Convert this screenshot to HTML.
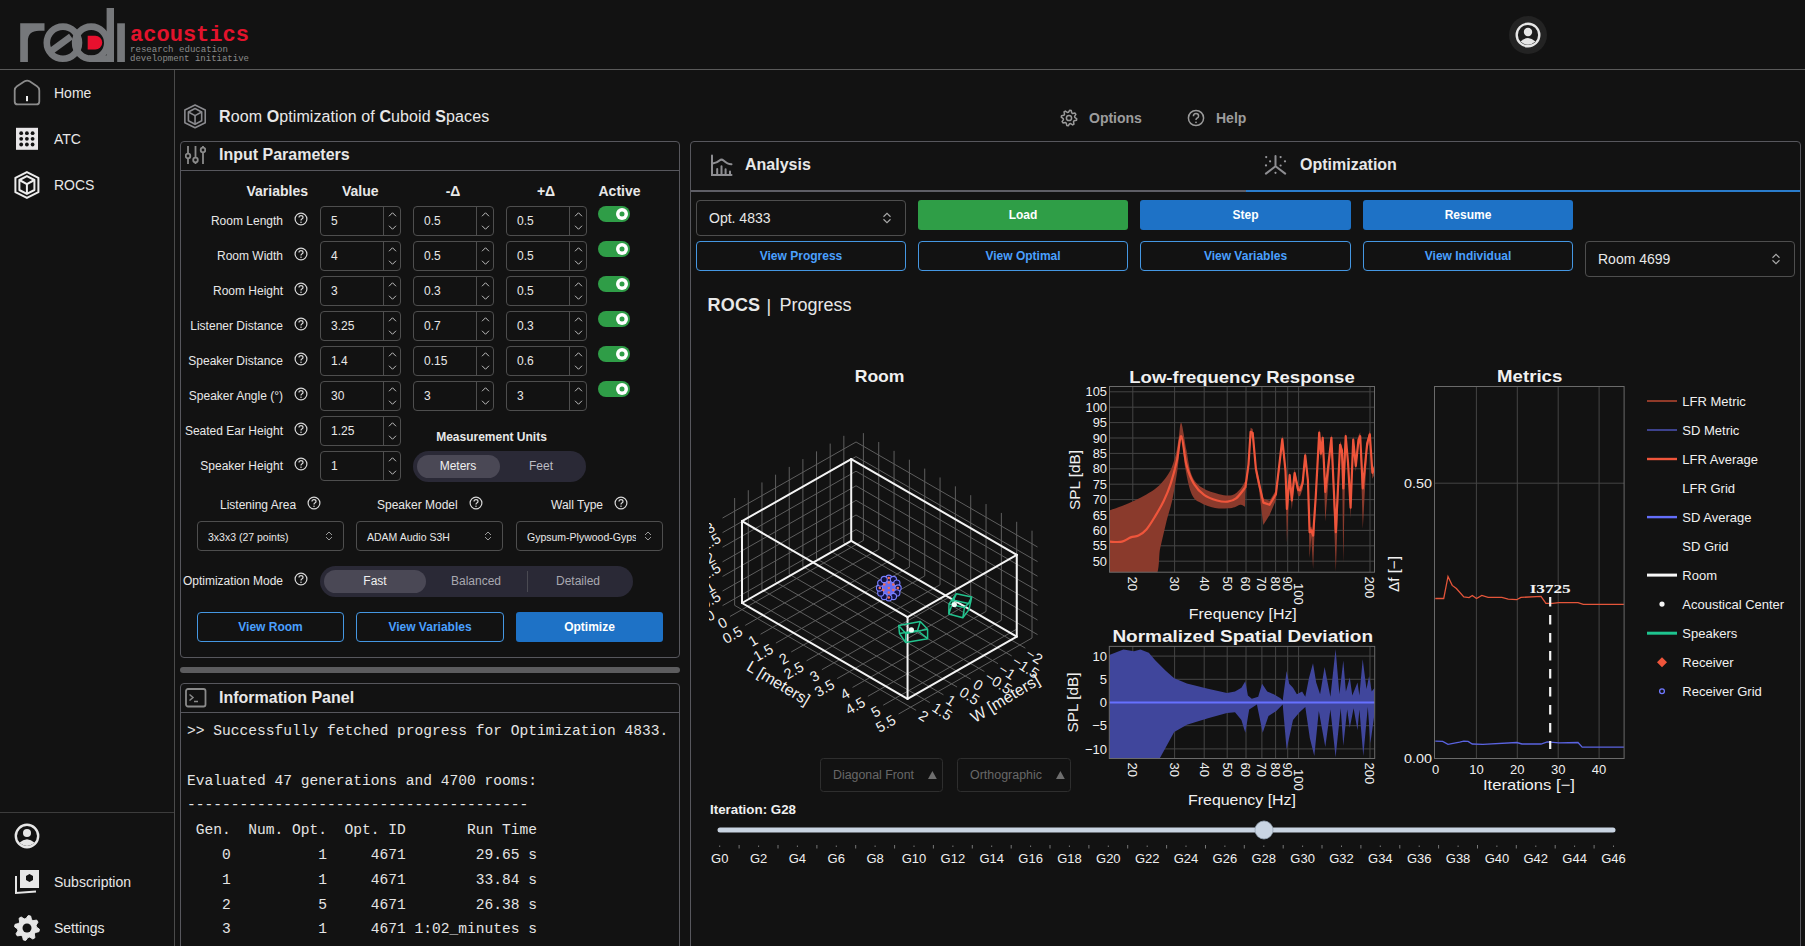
<!DOCTYPE html><html><head><meta charset="utf-8"><title>ROCS</title><style>
*{box-sizing:border-box;margin:0;padding:0}
html,body{width:1805px;height:946px;overflow:hidden;background:#121212;color:#e8e8e8;font-family:"Liberation Sans",sans-serif}
.a{position:absolute}
.t{position:absolute;white-space:nowrap;line-height:1}
.bd{font-weight:bold}
.panel{position:absolute;border:1px solid #57575d;border-radius:4px}
.inp{position:absolute;width:81px;height:30px;border:1px solid #4e4e4e;border-radius:4px}
.inp .sp{position:absolute;right:0;top:0;width:17px;height:28px;border-left:1px solid #4e4e4e}
.inp .v{position:absolute;left:10px;top:7.2px;font-size:12px;color:#e8e8e8}
.tog{position:absolute;width:32px;height:16px;border-radius:8px;background:#2f9d47}
.tog:after{content:"";position:absolute;right:2px;top:2px;width:12px;height:12px;border-radius:6px;background:#2f9d47;box-shadow:inset 0 0 0 3.5px #fff}
.btn{position:absolute;border-radius:3px;font-weight:bold;font-size:12px;text-align:center;color:#fff}
.obtn{position:absolute;border-radius:4px;border:1.5px solid #4597e2;font-weight:bold;font-size:12px;text-align:center;color:#4aa0ff}
.sel{position:absolute;border:1px solid #4e4e4e;border-radius:4px}
.help{position:absolute;width:13px;height:13px}
</style></head><body>
<div class="a" style="left:0;top:69px;width:1805px;height:1px;background:#5a5a5a"></div>
<svg class="a" style="left:0;top:0" width="260" height="69" viewBox="0 0 260 69">
<path d="M20.2,62 V23.3 H44.5 V30.8 H39 Q27.9,30.8 27.9,41 V62 Z" fill="#76787b"/>
<circle cx="62.9" cy="42.7" r="16.1" fill="none" stroke="#76787b" stroke-width="6.6"/>
<path d="M50.5,51.5 L71,36.5" stroke="#76787b" stroke-width="6.6"/>
<circle cx="91.2" cy="42.7" r="16.1" fill="none" stroke="#76787b" stroke-width="6.6"/>
<rect x="88.8" y="55.4" width="25.2" height="6.6" fill="#76787b"/>
<rect x="106.6" y="8" width="7.4" height="54" fill="#76787b"/>
<rect x="117.2" y="23.3" width="7.7" height="38.7" fill="#76787b"/>
<path d="M87.7,35.7 H95.3 A6.95,6.95 0 0 1 95.3,49.6 H87.7 Z" fill="#e8102e"/>
<text x="130" y="41" font-family="Liberation Mono" font-weight="bold" font-size="22" fill="#e3132c" textLength="119" lengthAdjust="spacingAndGlyphs">acoustics</text>
<text x="130" y="52" font-family="Liberation Mono" font-size="9" fill="#8a8a8a" textLength="98" lengthAdjust="spacingAndGlyphs">research education</text>
<text x="130" y="60.5" font-family="Liberation Mono" font-size="9" fill="#8a8a8a" textLength="119" lengthAdjust="spacingAndGlyphs">development initiative</text>
</svg>
<div class="a" style="left:1509px;top:16px;width:38px;height:38px;border-radius:19px;background:#232323"></div>
<svg class="a" style="left:1515px;top:22px" width="26" height="26" viewBox="0 0 26 26">
<circle cx="13" cy="13" r="11.3" fill="#1d1d1d" stroke="#e6e6e6" stroke-width="2.4"/>
<circle cx="13" cy="10" r="4.2" fill="#e6e6e6"/>
<path d="M5.5,19.5 Q13,12.5 20.5,19.5 Q13,26 5.5,19.5Z" fill="#e6e6e6"/>
</svg>
<div class="a" style="left:174px;top:70px;width:1px;height:876px;background:#4a4a4a"></div>
<div class="a" style="left:0;top:812px;width:174px;height:1px;background:#3c3c3c"></div>
<svg class="a" style="left:0;top:0;overflow:visible" width="1" height="1">
<path d="M14.7,90.5 Q14.7,87.8 17,86.3 L24.6,81.3 Q27.1,79.8 29.6,81.3 L37,86.3 Q39.3,87.8 39.3,90.5 V101.4 Q39.3,104.4 36.3,104.4 H17.7 Q14.7,104.4 14.7,101.4 Z" fill="none" stroke="#8c8c8c" stroke-width="1.8"/>
<rect x="26" y="96" width="2" height="5.2" fill="#f0f0f0"/>
</svg>
<div class="t" style="left:54px;top:86.15px;font-size:14px;color:#e8e8e8;">Home</div>
<svg class="a" style="left:0;top:0;overflow:visible" width="1" height="1"><rect x="16" y="127.8" width="22" height="22" fill="#e8e6e8"/><circle cx="21.20" cy="133.20" r="1.9" fill="#121212"/><circle cx="21.20" cy="138.85" r="1.9" fill="#121212"/><circle cx="21.20" cy="144.50" r="1.9" fill="#121212"/><circle cx="26.90" cy="133.20" r="1.9" fill="#121212"/><circle cx="26.90" cy="138.85" r="1.9" fill="#121212"/><circle cx="26.90" cy="144.50" r="1.9" fill="#121212"/><circle cx="32.60" cy="133.20" r="1.9" fill="#121212"/><circle cx="32.60" cy="138.85" r="1.9" fill="#121212"/><circle cx="32.60" cy="144.50" r="1.9" fill="#121212"/></svg>
<div class="t" style="left:54px;top:132.15px;font-size:14px;color:#e8e8e8;">ATC</div>
<svg class="a" style="left:0;top:0;overflow:visible" width="1" height="1">
<polygon points="26.90,172.10 38.40,177.80 38.40,192.20 26.90,197.90 15.40,192.20 15.40,177.80" fill="none" stroke="#ececec" stroke-width="2.0" stroke-linejoin="round"/>
<polygon points="26.90,176.10 34.40,180.00 34.40,190.00 26.90,193.90 19.40,190.00 19.40,180.00" fill="none" stroke="#ececec" stroke-width="2.0" stroke-linejoin="round"/>
<polyline points="19.40,180.00 26.90,184.10 34.40,180.00" fill="none" stroke="#ececec" stroke-width="2.0" stroke-linejoin="round"/>
<line x1="26.90" y1="184.10" x2="26.90" y2="193.90" stroke="#ececec" stroke-width="2.0"/>
</svg>
<div class="t" style="left:54px;top:178.15px;font-size:14px;color:#e8e8e8;">ROCS</div>
<svg class="a" style="left:14px;top:823px" width="26" height="26" viewBox="0 0 26 26">
<circle cx="13" cy="13" r="11.2" fill="none" stroke="#e6e6e6" stroke-width="2.4"/>
<circle cx="13" cy="10" r="4" fill="#e6e6e6"/>
<path d="M5.3,19.8 Q13,12.8 20.7,19.8 Q13,26 5.3,19.8Z" fill="#e6e6e6"/>
</svg>
<svg class="a" style="left:14px;top:869px" width="26" height="26" viewBox="0 0 26 26">
<rect x="6" y="1" width="19" height="18" fill="#e6e6e6"/>
<path d="M15.5,5 L19,7 V11 L15.5,13 L12,11 V7Z" fill="#121212"/>
<path d="M2,7 V24 L22,22.5" fill="none" stroke="#e6e6e6" stroke-width="2"/>
</svg>
<div class="t" style="left:54px;top:875.15px;font-size:14px;color:#e8e8e8;">Subscription</div>
<svg class="a" style="left:13px;top:914px" width="28" height="28" viewBox="0 0 28 28"><polygon points="15.23,1.56 17.63,2.04 18.48,5.62 20.03,6.66 23.66,6.07 25.02,8.11 23.09,11.24 23.45,13.07 26.44,15.23 25.96,17.63 22.38,18.48 21.34,20.03 21.93,23.66 19.89,25.02 16.76,23.09 14.93,23.45 12.77,26.44 10.37,25.96 9.52,22.38 7.97,21.34 4.34,21.93 2.98,19.89 4.91,16.76 4.55,14.93 1.56,12.77 2.04,10.37 5.62,9.52 6.66,7.97 6.07,4.34 8.11,2.98 11.24,4.91 13.07,4.55" fill="#e6e6e6" stroke="#e6e6e6" stroke-width="1" stroke-linejoin="round"/><circle cx="14" cy="14" r="4.5" fill="#121212"/></svg>
<div class="t" style="left:54px;top:921.15px;font-size:14px;color:#e8e8e8;">Settings</div>
<svg class="a" style="left:0;top:0;overflow:visible" width="1" height="1">
<polygon points="195.05,104.98 205.23,110.03 205.23,122.77 195.05,127.82 184.87,122.77 184.87,110.03" fill="none" stroke="#8a8a8e" stroke-width="1.6" stroke-linejoin="round"/>
<polygon points="195.05,108.52 201.69,111.98 201.69,120.83 195.05,124.28 188.41,120.83 188.41,111.98" fill="none" stroke="#8a8a8e" stroke-width="1.6" stroke-linejoin="round"/>
<polyline points="188.41,111.98 195.05,115.60 201.69,111.98" fill="none" stroke="#8a8a8e" stroke-width="1.6" stroke-linejoin="round"/>
<line x1="195.05" y1="115.60" x2="195.05" y2="124.28" stroke="#8a8a8e" stroke-width="1.6"/>
</svg>
<div class="t" style="left:219px;top:108.5px;font-size:16px;letter-spacing:0.1px;color:#e8e8e8"><b>R</b>oom <b>O</b>ptimization of <b>C</b>uboid <b>S</b>paces</div>
<svg class="a" style="left:1060px;top:109px" width="18" height="18" viewBox="0 0 18 18"><polygon points="9.76,1.24 11.26,1.54 11.73,3.88 12.68,4.52 15.03,4.05 15.88,5.32 14.55,7.32 14.77,8.43 16.76,9.76 16.46,11.26 14.12,11.73 13.48,12.68 13.95,15.03 12.68,15.88 10.68,14.55 9.57,14.77 8.24,16.76 6.74,16.46 6.27,14.12 5.32,13.48 2.97,13.95 2.12,12.68 3.45,10.68 3.23,9.57 1.24,8.24 1.54,6.74 3.88,6.27 4.52,5.32 4.05,2.97 5.32,2.12 7.32,3.45 8.43,3.23" fill="none" stroke="#9a9a9a" stroke-width="1.5" stroke-linejoin="round"/><circle cx="9" cy="9" r="2.6" fill="none" stroke="#9a9a9a" stroke-width="1.5"/></svg>
<div class="t" style="left:1089px;top:110.65px;font-size:14px;color:#9c9c9c;font-weight:bold;">Options</div>
<svg class="a" style="left:1187px;top:109px" width="18" height="18" viewBox="0 0 18 18">
<circle cx="9" cy="9" r="7.6" fill="none" stroke="#9a9a9a" stroke-width="1.5"/>
<path d="M6.4,7.2 Q6.4,4.4 9,4.4 Q11.6,4.4 11.6,6.9 Q11.6,8.4 9.9,9.2 Q9,9.7 9,11" fill="none" stroke="#9a9a9a" stroke-width="1.5"/>
<circle cx="9" cy="13.3" r="0.9" fill="#9a9a9a"/>
</svg>
<div class="t" style="left:1216px;top:110.65px;font-size:14px;color:#9c9c9c;font-weight:bold;">Help</div>
<div class="panel" style="left:180px;top:141px;width:500px;height:517px"></div>
<div class="a" style="left:181px;top:170px;width:498px;height:1px;background:#57575d"></div>
<svg class="a" style="left:185px;top:145px" width="21" height="20" viewBox="0 0 21 20">
<g stroke="#8a8a8a" stroke-width="1.8" fill="none">
<path d="M3,1 V19 M10.5,1 V19 M18,1 V19"/>
<circle cx="3" cy="11" r="2.3" fill="#121212"/>
<circle cx="10.5" cy="15" r="2.3" fill="#121212"/>
<circle cx="18" cy="5" r="2.3" fill="#121212"/>
</g></svg>
<div class="t" style="left:219px;top:146.96px;font-size:16px;color:#e8e8e8;font-weight:bold;">Input Parameters</div>
<div class="t" style="left:246.5px;top:184.15px;font-size:14px;color:#e8e8e8;font-weight:bold;">Variables</div>
<div class="t" style="left:342px;top:184.15px;font-size:14px;color:#e8e8e8;font-weight:bold;">Value</div>
<div class="t" style="left:153px;width:600px;text-align:center;top:184.15px;font-size:14px;color:#e8e8e8;font-weight:bold;">-&Delta;</div>
<div class="t" style="left:246px;width:600px;text-align:center;top:184.15px;font-size:14px;color:#e8e8e8;font-weight:bold;">+&Delta;</div>
<div class="t" style="left:598.5px;top:184.15px;font-size:14px;color:#e8e8e8;font-weight:bold;">Active</div>
<div class="t" style="left:-317px;width:600px;text-align:right;top:214.84px;font-size:12px;color:#e8e8e8;">Room Length</div>
<svg class="a" style="left:293.5px;top:211.5px" width="14" height="14" viewBox="0 0 14 14">
<circle cx="7" cy="7" r="5.9" fill="none" stroke="#d8d8d8" stroke-width="1.2"/>
<path d="M5,5.6 Q5,3.6 7,3.6 Q9,3.6 9,5.4 Q9,6.5 7.8,7 Q7,7.4 7,8.6" fill="none" stroke="#d8d8d8" stroke-width="1.2"/>
<circle cx="7" cy="10.3" r="0.75" fill="#d8d8d8"/>
</svg>
<div class="inp" style="left:320px;top:206px"><div class="sp"></div><div class="v">5</div></div>
<svg class="a" style="left:384px;top:206px" width="17" height="30" viewBox="0 0 17 30"><path d="M5.0,10.25 L8.5,6.75 L12.0,10.25" fill="none" stroke="#bdbdbd" stroke-width="1"/><path d="M5.0,19.75 L8.5,23.25 L12.0,19.75" fill="none" stroke="#bdbdbd" stroke-width="1"/></svg>
<div class="inp" style="left:413px;top:206px"><div class="sp"></div><div class="v">0.5</div></div>
<svg class="a" style="left:477px;top:206px" width="17" height="30" viewBox="0 0 17 30"><path d="M5.0,10.25 L8.5,6.75 L12.0,10.25" fill="none" stroke="#bdbdbd" stroke-width="1"/><path d="M5.0,19.75 L8.5,23.25 L12.0,19.75" fill="none" stroke="#bdbdbd" stroke-width="1"/></svg>
<div class="inp" style="left:506px;top:206px"><div class="sp"></div><div class="v">0.5</div></div>
<svg class="a" style="left:570px;top:206px" width="17" height="30" viewBox="0 0 17 30"><path d="M5.0,10.25 L8.5,6.75 L12.0,10.25" fill="none" stroke="#bdbdbd" stroke-width="1"/><path d="M5.0,19.75 L8.5,23.25 L12.0,19.75" fill="none" stroke="#bdbdbd" stroke-width="1"/></svg>
<div class="tog" style="left:598px;top:206px"></div>
<div class="t" style="left:-317px;width:600px;text-align:right;top:249.84px;font-size:12px;color:#e8e8e8;">Room Width</div>
<svg class="a" style="left:293.5px;top:246.5px" width="14" height="14" viewBox="0 0 14 14">
<circle cx="7" cy="7" r="5.9" fill="none" stroke="#d8d8d8" stroke-width="1.2"/>
<path d="M5,5.6 Q5,3.6 7,3.6 Q9,3.6 9,5.4 Q9,6.5 7.8,7 Q7,7.4 7,8.6" fill="none" stroke="#d8d8d8" stroke-width="1.2"/>
<circle cx="7" cy="10.3" r="0.75" fill="#d8d8d8"/>
</svg>
<div class="inp" style="left:320px;top:241px"><div class="sp"></div><div class="v">4</div></div>
<svg class="a" style="left:384px;top:241px" width="17" height="30" viewBox="0 0 17 30"><path d="M5.0,10.25 L8.5,6.75 L12.0,10.25" fill="none" stroke="#bdbdbd" stroke-width="1"/><path d="M5.0,19.75 L8.5,23.25 L12.0,19.75" fill="none" stroke="#bdbdbd" stroke-width="1"/></svg>
<div class="inp" style="left:413px;top:241px"><div class="sp"></div><div class="v">0.5</div></div>
<svg class="a" style="left:477px;top:241px" width="17" height="30" viewBox="0 0 17 30"><path d="M5.0,10.25 L8.5,6.75 L12.0,10.25" fill="none" stroke="#bdbdbd" stroke-width="1"/><path d="M5.0,19.75 L8.5,23.25 L12.0,19.75" fill="none" stroke="#bdbdbd" stroke-width="1"/></svg>
<div class="inp" style="left:506px;top:241px"><div class="sp"></div><div class="v">0.5</div></div>
<svg class="a" style="left:570px;top:241px" width="17" height="30" viewBox="0 0 17 30"><path d="M5.0,10.25 L8.5,6.75 L12.0,10.25" fill="none" stroke="#bdbdbd" stroke-width="1"/><path d="M5.0,19.75 L8.5,23.25 L12.0,19.75" fill="none" stroke="#bdbdbd" stroke-width="1"/></svg>
<div class="tog" style="left:598px;top:241px"></div>
<div class="t" style="left:-317px;width:600px;text-align:right;top:284.84px;font-size:12px;color:#e8e8e8;">Room Height</div>
<svg class="a" style="left:293.5px;top:281.5px" width="14" height="14" viewBox="0 0 14 14">
<circle cx="7" cy="7" r="5.9" fill="none" stroke="#d8d8d8" stroke-width="1.2"/>
<path d="M5,5.6 Q5,3.6 7,3.6 Q9,3.6 9,5.4 Q9,6.5 7.8,7 Q7,7.4 7,8.6" fill="none" stroke="#d8d8d8" stroke-width="1.2"/>
<circle cx="7" cy="10.3" r="0.75" fill="#d8d8d8"/>
</svg>
<div class="inp" style="left:320px;top:276px"><div class="sp"></div><div class="v">3</div></div>
<svg class="a" style="left:384px;top:276px" width="17" height="30" viewBox="0 0 17 30"><path d="M5.0,10.25 L8.5,6.75 L12.0,10.25" fill="none" stroke="#bdbdbd" stroke-width="1"/><path d="M5.0,19.75 L8.5,23.25 L12.0,19.75" fill="none" stroke="#bdbdbd" stroke-width="1"/></svg>
<div class="inp" style="left:413px;top:276px"><div class="sp"></div><div class="v">0.3</div></div>
<svg class="a" style="left:477px;top:276px" width="17" height="30" viewBox="0 0 17 30"><path d="M5.0,10.25 L8.5,6.75 L12.0,10.25" fill="none" stroke="#bdbdbd" stroke-width="1"/><path d="M5.0,19.75 L8.5,23.25 L12.0,19.75" fill="none" stroke="#bdbdbd" stroke-width="1"/></svg>
<div class="inp" style="left:506px;top:276px"><div class="sp"></div><div class="v">0.5</div></div>
<svg class="a" style="left:570px;top:276px" width="17" height="30" viewBox="0 0 17 30"><path d="M5.0,10.25 L8.5,6.75 L12.0,10.25" fill="none" stroke="#bdbdbd" stroke-width="1"/><path d="M5.0,19.75 L8.5,23.25 L12.0,19.75" fill="none" stroke="#bdbdbd" stroke-width="1"/></svg>
<div class="tog" style="left:598px;top:276px"></div>
<div class="t" style="left:-317px;width:600px;text-align:right;top:319.84px;font-size:12px;color:#e8e8e8;">Listener Distance</div>
<svg class="a" style="left:293.5px;top:316.5px" width="14" height="14" viewBox="0 0 14 14">
<circle cx="7" cy="7" r="5.9" fill="none" stroke="#d8d8d8" stroke-width="1.2"/>
<path d="M5,5.6 Q5,3.6 7,3.6 Q9,3.6 9,5.4 Q9,6.5 7.8,7 Q7,7.4 7,8.6" fill="none" stroke="#d8d8d8" stroke-width="1.2"/>
<circle cx="7" cy="10.3" r="0.75" fill="#d8d8d8"/>
</svg>
<div class="inp" style="left:320px;top:311px"><div class="sp"></div><div class="v">3.25</div></div>
<svg class="a" style="left:384px;top:311px" width="17" height="30" viewBox="0 0 17 30"><path d="M5.0,10.25 L8.5,6.75 L12.0,10.25" fill="none" stroke="#bdbdbd" stroke-width="1"/><path d="M5.0,19.75 L8.5,23.25 L12.0,19.75" fill="none" stroke="#bdbdbd" stroke-width="1"/></svg>
<div class="inp" style="left:413px;top:311px"><div class="sp"></div><div class="v">0.7</div></div>
<svg class="a" style="left:477px;top:311px" width="17" height="30" viewBox="0 0 17 30"><path d="M5.0,10.25 L8.5,6.75 L12.0,10.25" fill="none" stroke="#bdbdbd" stroke-width="1"/><path d="M5.0,19.75 L8.5,23.25 L12.0,19.75" fill="none" stroke="#bdbdbd" stroke-width="1"/></svg>
<div class="inp" style="left:506px;top:311px"><div class="sp"></div><div class="v">0.3</div></div>
<svg class="a" style="left:570px;top:311px" width="17" height="30" viewBox="0 0 17 30"><path d="M5.0,10.25 L8.5,6.75 L12.0,10.25" fill="none" stroke="#bdbdbd" stroke-width="1"/><path d="M5.0,19.75 L8.5,23.25 L12.0,19.75" fill="none" stroke="#bdbdbd" stroke-width="1"/></svg>
<div class="tog" style="left:598px;top:311px"></div>
<div class="t" style="left:-317px;width:600px;text-align:right;top:354.84px;font-size:12px;color:#e8e8e8;">Speaker Distance</div>
<svg class="a" style="left:293.5px;top:351.5px" width="14" height="14" viewBox="0 0 14 14">
<circle cx="7" cy="7" r="5.9" fill="none" stroke="#d8d8d8" stroke-width="1.2"/>
<path d="M5,5.6 Q5,3.6 7,3.6 Q9,3.6 9,5.4 Q9,6.5 7.8,7 Q7,7.4 7,8.6" fill="none" stroke="#d8d8d8" stroke-width="1.2"/>
<circle cx="7" cy="10.3" r="0.75" fill="#d8d8d8"/>
</svg>
<div class="inp" style="left:320px;top:346px"><div class="sp"></div><div class="v">1.4</div></div>
<svg class="a" style="left:384px;top:346px" width="17" height="30" viewBox="0 0 17 30"><path d="M5.0,10.25 L8.5,6.75 L12.0,10.25" fill="none" stroke="#bdbdbd" stroke-width="1"/><path d="M5.0,19.75 L8.5,23.25 L12.0,19.75" fill="none" stroke="#bdbdbd" stroke-width="1"/></svg>
<div class="inp" style="left:413px;top:346px"><div class="sp"></div><div class="v">0.15</div></div>
<svg class="a" style="left:477px;top:346px" width="17" height="30" viewBox="0 0 17 30"><path d="M5.0,10.25 L8.5,6.75 L12.0,10.25" fill="none" stroke="#bdbdbd" stroke-width="1"/><path d="M5.0,19.75 L8.5,23.25 L12.0,19.75" fill="none" stroke="#bdbdbd" stroke-width="1"/></svg>
<div class="inp" style="left:506px;top:346px"><div class="sp"></div><div class="v">0.6</div></div>
<svg class="a" style="left:570px;top:346px" width="17" height="30" viewBox="0 0 17 30"><path d="M5.0,10.25 L8.5,6.75 L12.0,10.25" fill="none" stroke="#bdbdbd" stroke-width="1"/><path d="M5.0,19.75 L8.5,23.25 L12.0,19.75" fill="none" stroke="#bdbdbd" stroke-width="1"/></svg>
<div class="tog" style="left:598px;top:346px"></div>
<div class="t" style="left:-317px;width:600px;text-align:right;top:389.84px;font-size:12px;color:#e8e8e8;">Speaker Angle (&deg;)</div>
<svg class="a" style="left:293.5px;top:386.5px" width="14" height="14" viewBox="0 0 14 14">
<circle cx="7" cy="7" r="5.9" fill="none" stroke="#d8d8d8" stroke-width="1.2"/>
<path d="M5,5.6 Q5,3.6 7,3.6 Q9,3.6 9,5.4 Q9,6.5 7.8,7 Q7,7.4 7,8.6" fill="none" stroke="#d8d8d8" stroke-width="1.2"/>
<circle cx="7" cy="10.3" r="0.75" fill="#d8d8d8"/>
</svg>
<div class="inp" style="left:320px;top:381px"><div class="sp"></div><div class="v">30</div></div>
<svg class="a" style="left:384px;top:381px" width="17" height="30" viewBox="0 0 17 30"><path d="M5.0,10.25 L8.5,6.75 L12.0,10.25" fill="none" stroke="#bdbdbd" stroke-width="1"/><path d="M5.0,19.75 L8.5,23.25 L12.0,19.75" fill="none" stroke="#bdbdbd" stroke-width="1"/></svg>
<div class="inp" style="left:413px;top:381px"><div class="sp"></div><div class="v">3</div></div>
<svg class="a" style="left:477px;top:381px" width="17" height="30" viewBox="0 0 17 30"><path d="M5.0,10.25 L8.5,6.75 L12.0,10.25" fill="none" stroke="#bdbdbd" stroke-width="1"/><path d="M5.0,19.75 L8.5,23.25 L12.0,19.75" fill="none" stroke="#bdbdbd" stroke-width="1"/></svg>
<div class="inp" style="left:506px;top:381px"><div class="sp"></div><div class="v">3</div></div>
<svg class="a" style="left:570px;top:381px" width="17" height="30" viewBox="0 0 17 30"><path d="M5.0,10.25 L8.5,6.75 L12.0,10.25" fill="none" stroke="#bdbdbd" stroke-width="1"/><path d="M5.0,19.75 L8.5,23.25 L12.0,19.75" fill="none" stroke="#bdbdbd" stroke-width="1"/></svg>
<div class="tog" style="left:598px;top:381px"></div>
<div class="t" style="left:-317px;width:600px;text-align:right;top:424.84px;font-size:12px;color:#e8e8e8;">Seated Ear Height</div>
<svg class="a" style="left:293.5px;top:421.5px" width="14" height="14" viewBox="0 0 14 14">
<circle cx="7" cy="7" r="5.9" fill="none" stroke="#d8d8d8" stroke-width="1.2"/>
<path d="M5,5.6 Q5,3.6 7,3.6 Q9,3.6 9,5.4 Q9,6.5 7.8,7 Q7,7.4 7,8.6" fill="none" stroke="#d8d8d8" stroke-width="1.2"/>
<circle cx="7" cy="10.3" r="0.75" fill="#d8d8d8"/>
</svg>
<div class="inp" style="left:320px;top:416px"><div class="sp"></div><div class="v">1.25</div></div>
<svg class="a" style="left:384px;top:416px" width="17" height="30" viewBox="0 0 17 30"><path d="M5.0,10.25 L8.5,6.75 L12.0,10.25" fill="none" stroke="#bdbdbd" stroke-width="1"/><path d="M5.0,19.75 L8.5,23.25 L12.0,19.75" fill="none" stroke="#bdbdbd" stroke-width="1"/></svg>
<div class="t" style="left:-317px;width:600px;text-align:right;top:459.84px;font-size:12px;color:#e8e8e8;">Speaker Height</div>
<svg class="a" style="left:293.5px;top:456.5px" width="14" height="14" viewBox="0 0 14 14">
<circle cx="7" cy="7" r="5.9" fill="none" stroke="#d8d8d8" stroke-width="1.2"/>
<path d="M5,5.6 Q5,3.6 7,3.6 Q9,3.6 9,5.4 Q9,6.5 7.8,7 Q7,7.4 7,8.6" fill="none" stroke="#d8d8d8" stroke-width="1.2"/>
<circle cx="7" cy="10.3" r="0.75" fill="#d8d8d8"/>
</svg>
<div class="inp" style="left:320px;top:451px"><div class="sp"></div><div class="v">1</div></div>
<svg class="a" style="left:384px;top:451px" width="17" height="30" viewBox="0 0 17 30"><path d="M5.0,10.25 L8.5,6.75 L12.0,10.25" fill="none" stroke="#bdbdbd" stroke-width="1"/><path d="M5.0,19.75 L8.5,23.25 L12.0,19.75" fill="none" stroke="#bdbdbd" stroke-width="1"/></svg>
<div class="t" style="left:191.5px;width:600px;text-align:center;top:431.34px;font-size:12px;color:#e8e8e8;font-weight:bold;">Measurement Units</div>
<div class="a" style="left:413px;top:451px;width:173px;height:31px;border-radius:15.5px;background:#2a2936"></div>
<div class="a" style="left:417px;top:455px;width:83px;height:23px;border-radius:11.5px;background:#4a4855"></div>
<div class="t" style="left:158px;width:600px;text-align:center;top:459.84px;font-size:12px;color:#f0f0f0;">Meters</div>
<div class="t" style="left:241px;width:600px;text-align:center;top:459.84px;font-size:12px;color:#bcbcc4;">Feet</div>
<div class="t" style="left:220px;top:498.84px;font-size:12px;color:#e8e8e8;">Listening Area</div>
<svg class="a" style="left:307px;top:495.5px" width="14" height="14" viewBox="0 0 14 14">
<circle cx="7" cy="7" r="5.9" fill="none" stroke="#d8d8d8" stroke-width="1.2"/>
<path d="M5,5.6 Q5,3.6 7,3.6 Q9,3.6 9,5.4 Q9,6.5 7.8,7 Q7,7.4 7,8.6" fill="none" stroke="#d8d8d8" stroke-width="1.2"/>
<circle cx="7" cy="10.3" r="0.75" fill="#d8d8d8"/>
</svg>
<div class="sel" style="left:197px;top:521px;width:147px;height:30px"></div>
<div class="t" style="left:208px;top:531.61px;font-size:10.5px;color:#e8e8e8;">3x3x3 (27 points)</div>
<svg class="a" style="left:322px;top:528px" width="14" height="16" viewBox="0 0 14 16"><path d="M4.0,7.0 L7,4.0 L10.0,7.0" fill="none" stroke="#999" stroke-width="1"/><path d="M4.0,9.0 L7,12.0 L10.0,9.0" fill="none" stroke="#999" stroke-width="1"/></svg>
<div class="t" style="left:377px;top:498.84px;font-size:12px;color:#e8e8e8;">Speaker Model</div>
<svg class="a" style="left:469px;top:495.5px" width="14" height="14" viewBox="0 0 14 14">
<circle cx="7" cy="7" r="5.9" fill="none" stroke="#d8d8d8" stroke-width="1.2"/>
<path d="M5,5.6 Q5,3.6 7,3.6 Q9,3.6 9,5.4 Q9,6.5 7.8,7 Q7,7.4 7,8.6" fill="none" stroke="#d8d8d8" stroke-width="1.2"/>
<circle cx="7" cy="10.3" r="0.75" fill="#d8d8d8"/>
</svg>
<div class="sel" style="left:356px;top:521px;width:147px;height:30px"></div>
<div class="t" style="left:367px;top:531.61px;font-size:10.5px;color:#e8e8e8;">ADAM Audio S3H</div>
<svg class="a" style="left:481px;top:528px" width="14" height="16" viewBox="0 0 14 16"><path d="M4.0,7.0 L7,4.0 L10.0,7.0" fill="none" stroke="#999" stroke-width="1"/><path d="M4.0,9.0 L7,12.0 L10.0,9.0" fill="none" stroke="#999" stroke-width="1"/></svg>
<div class="t" style="left:551px;top:498.84px;font-size:12px;color:#e8e8e8;">Wall Type</div>
<svg class="a" style="left:614px;top:495.5px" width="14" height="14" viewBox="0 0 14 14">
<circle cx="7" cy="7" r="5.9" fill="none" stroke="#d8d8d8" stroke-width="1.2"/>
<path d="M5,5.6 Q5,3.6 7,3.6 Q9,3.6 9,5.4 Q9,6.5 7.8,7 Q7,7.4 7,8.6" fill="none" stroke="#d8d8d8" stroke-width="1.2"/>
<circle cx="7" cy="10.3" r="0.75" fill="#d8d8d8"/>
</svg>
<div class="sel" style="left:516px;top:521px;width:147px;height:30px"></div>
<div class="t" style="left:527px;top:531.61px;font-size:10.5px;color:#e8e8e8;">Gypsum-Plywood-Gyps</div>
<svg class="a" style="left:641px;top:528px" width="14" height="16" viewBox="0 0 14 16"><path d="M4.0,7.0 L7,4.0 L10.0,7.0" fill="none" stroke="#999" stroke-width="1"/><path d="M4.0,9.0 L7,12.0 L10.0,9.0" fill="none" stroke="#999" stroke-width="1"/></svg>
<div class="a" style="left:636px;top:530px;width:6px;height:14px;background:#121212"></div>
<div class="t" style="left:-317px;width:600px;text-align:right;top:574.84px;font-size:12px;color:#e8e8e8;">Optimization Mode</div>
<svg class="a" style="left:293.5px;top:572px" width="14" height="14" viewBox="0 0 14 14">
<circle cx="7" cy="7" r="5.9" fill="none" stroke="#d8d8d8" stroke-width="1.2"/>
<path d="M5,5.6 Q5,3.6 7,3.6 Q9,3.6 9,5.4 Q9,6.5 7.8,7 Q7,7.4 7,8.6" fill="none" stroke="#d8d8d8" stroke-width="1.2"/>
<circle cx="7" cy="10.3" r="0.75" fill="#d8d8d8"/>
</svg>
<div class="a" style="left:320px;top:566px;width:313px;height:31px;border-radius:15.5px;background:#2a2936"></div>
<div class="a" style="left:324px;top:570px;width:102px;height:23px;border-radius:11.5px;background:#4a4855"></div>
<div class="a" style="left:527px;top:571px;width:1px;height:21px;background:#4a4a52"></div>
<div class="t" style="left:75px;width:600px;text-align:center;top:574.84px;font-size:12px;color:#f0f0f0;">Fast</div>
<div class="t" style="left:176px;width:600px;text-align:center;top:574.84px;font-size:12px;color:#a8a8b0;">Balanced</div>
<div class="t" style="left:278px;width:600px;text-align:center;top:574.84px;font-size:12px;color:#a8a8b0;">Detailed</div>
<div class="obtn" style="left:197px;top:612px;width:147px;height:30px;line-height:29px">View Room</div>
<div class="obtn" style="left:356px;top:612px;width:148px;height:30px;line-height:29px">View Variables</div>
<div class="btn" style="left:516px;top:612px;width:147px;height:30px;line-height:30px;background:#1e72c6">Optimize</div>
<div class="a" style="left:180px;top:667px;width:500px;height:6px;border-radius:3px;background:#5c5c5e"></div>
<div class="panel" style="left:180px;top:683px;width:500px;height:280px"></div>
<div class="a" style="left:181px;top:712px;width:498px;height:1px;background:#57575d"></div>
<svg class="a" style="left:185px;top:688px" width="22" height="20" viewBox="0 0 22 20">
<rect x="1" y="1" width="19.5" height="17.5" rx="2" fill="none" stroke="#8a8a8a" stroke-width="1.8"/>
<path d="M4.5,6.5 L8,9.5 L4.5,12.5 M9,13.5 H13" fill="none" stroke="#8a8a8a" stroke-width="1.5"/>
</svg>
<div class="t" style="left:219px;top:690.06px;font-size:16px;color:#e8e8e8;font-weight:bold;">Information Panel</div>
<div class="a" style="left:187px;top:719px;font-family:'Liberation Mono',monospace;font-size:14.58px;line-height:24.8px;white-space:pre;color:#e4e4e4">&gt;&gt; Successfully fetched progress for Optimization 4833.

Evaluated 47 generations and 4700 rooms:
---------------------------------------
 Gen.  Num. Opt.  Opt. ID       Run Time
    0          1     4671        29.65 s
    1          1     4671        33.84 s
    2          5     4671        26.38 s
    3          1     4671 1:02_minutes s</div>
<div class="panel" style="left:690px;top:141px;width:1111px;height:820px"></div>
<div class="a" style="left:691px;top:190px;width:555px;height:2px;background:#5e5e66"></div>
<div class="a" style="left:1246px;top:190px;width:554px;height:2px;background:#2a7ccc"></div>
<svg class="a" style="left:0;top:0;overflow:visible" width="1" height="1">
<g fill="none" stroke="#8e8e92" stroke-width="2" stroke-linecap="round">
<path d="M712,155.5 V175 H731.5"/>
<path d="M712.6,163.4 Q717,163 719.5,160.5 Q721.5,158.7 723.5,160.5 Q728,164.5 731.5,164.3"/>
<path d="M717.2,174 V169 M721.5,174 V166.2 M725.6,174 V169.2 M730,174 V171.4"/>
</g></svg>
<div class="t" style="left:745px;top:156.96px;font-size:16px;color:#e8e8e8;font-weight:bold;">Analysis</div>
<svg class="a" style="left:0;top:0;overflow:visible" width="1" height="1">
<g stroke="#8e8e92" stroke-width="2" fill="none" stroke-linecap="round">
<path d="M1275.5,156 V166.2 L1265.9,173.6 M1275.5,166.2 L1285.2,173.6"/>
</g>
<g fill="#9a9a9e">
<circle cx="1266.2" cy="157.1" r="1.1"/><circle cx="1270.1" cy="161.3" r="1.1"/><circle cx="1266" cy="165.4" r="1.1"/>
<circle cx="1280.6" cy="157.1" r="1.1"/><circle cx="1285" cy="161.3" r="1.1"/><circle cx="1280.6" cy="165.5" r="1.1"/><circle cx="1275.5" cy="172.8" r="1.1"/>
</g></svg>
<div class="t" style="left:1300px;top:156.96px;font-size:16px;color:#e8e8e8;font-weight:bold;">Optimization</div>
<div class="sel" style="left:696px;top:200px;width:210px;height:36px"></div>
<div class="t" style="left:709px;top:211.15px;font-size:14px;color:#e8e8e8;">Opt. 4833</div>
<svg class="a" style="left:880px;top:209px" width="14" height="18" viewBox="0 0 14 18"><path d="M3.5,7.75 L7,4.25 L10.5,7.75" fill="none" stroke="#aaa" stroke-width="1.1"/><path d="M3.5,10.25 L7,13.75 L10.5,10.25" fill="none" stroke="#aaa" stroke-width="1.1"/></svg>
<div class="btn" style="left:918px;top:200px;width:210px;height:30px;line-height:30px;background:#2f9e47">Load</div>
<div class="btn" style="left:1140px;top:200px;width:211px;height:30px;line-height:30px;background:#1e72c6">Step</div>
<div class="btn" style="left:1363px;top:200px;width:210px;height:30px;line-height:30px;background:#1e72c6">Resume</div>
<div class="obtn" style="left:696px;top:241px;width:210px;height:30px;line-height:29px">View Progress</div>
<div class="obtn" style="left:918px;top:241px;width:210px;height:30px;line-height:29px">View Optimal</div>
<div class="obtn" style="left:1140px;top:241px;width:211px;height:30px;line-height:29px">View Variables</div>
<div class="obtn" style="left:1363px;top:241px;width:210px;height:30px;line-height:29px">View Individual</div>
<div class="sel" style="left:1585px;top:241px;width:210px;height:36px"></div>
<div class="t" style="left:1598px;top:252.15px;font-size:14px;color:#e8e8e8;">Room 4699</div>
<svg class="a" style="left:1769px;top:250px" width="14" height="18" viewBox="0 0 14 18"><path d="M3.5,7.75 L7,4.25 L10.5,7.75" fill="none" stroke="#aaa" stroke-width="1.1"/><path d="M3.5,10.25 L7,13.75 L10.5,10.25" fill="none" stroke="#aaa" stroke-width="1.1"/></svg>
<div class="t" style="left:707.5px;top:296.06px;font-size:18px;color:#e8e8e8;font-weight:bold;letter-spacing:0.2px">ROCS</div>
<div class="t" style="left:766.5px;top:296.76px;font-size:18px;color:#e8e8e8;">|</div>
<div class="t" style="left:779.5px;top:296.06px;font-size:18px;color:#e8e8e8;">Progress</div>
<svg class="a" style="left:0;top:0" width="1805" height="946" viewBox="0 0 1805 946"><defs><clipPath id="c3d"><rect x="709" y="330" width="360" height="420"/></clipPath></defs><g clip-path="url(#c3d)"><line x1="863.40" y1="540.45" x2="729.91" y2="616.49" stroke="#5e5e5e" stroke-width="1"/><line x1="863.40" y1="540.45" x2="863.40" y2="433.11" stroke="#5e5e5e" stroke-width="1"/><line x1="878.73" y1="549.32" x2="745.24" y2="625.36" stroke="#5e5e5e" stroke-width="1"/><line x1="878.73" y1="549.32" x2="878.73" y2="441.98" stroke="#5e5e5e" stroke-width="1"/><line x1="894.06" y1="558.19" x2="760.57" y2="634.23" stroke="#5e5e5e" stroke-width="1"/><line x1="894.06" y1="558.19" x2="894.06" y2="450.85" stroke="#5e5e5e" stroke-width="1"/><line x1="909.39" y1="567.06" x2="775.90" y2="643.10" stroke="#5e5e5e" stroke-width="1"/><line x1="909.39" y1="567.06" x2="909.39" y2="459.72" stroke="#5e5e5e" stroke-width="1"/><line x1="924.72" y1="575.93" x2="791.23" y2="651.97" stroke="#5e5e5e" stroke-width="1"/><line x1="924.72" y1="575.93" x2="924.72" y2="468.59" stroke="#5e5e5e" stroke-width="1"/><line x1="940.05" y1="584.80" x2="806.56" y2="660.84" stroke="#5e5e5e" stroke-width="1"/><line x1="940.05" y1="584.80" x2="940.05" y2="477.46" stroke="#5e5e5e" stroke-width="1"/><line x1="955.38" y1="593.67" x2="821.89" y2="669.71" stroke="#5e5e5e" stroke-width="1"/><line x1="955.38" y1="593.67" x2="955.38" y2="486.33" stroke="#5e5e5e" stroke-width="1"/><line x1="970.71" y1="602.54" x2="837.22" y2="678.58" stroke="#5e5e5e" stroke-width="1"/><line x1="970.71" y1="602.54" x2="970.71" y2="495.20" stroke="#5e5e5e" stroke-width="1"/><line x1="986.04" y1="611.41" x2="852.55" y2="687.45" stroke="#5e5e5e" stroke-width="1"/><line x1="986.04" y1="611.41" x2="986.04" y2="504.07" stroke="#5e5e5e" stroke-width="1"/><line x1="1001.37" y1="620.28" x2="867.88" y2="696.32" stroke="#5e5e5e" stroke-width="1"/><line x1="1001.37" y1="620.28" x2="1001.37" y2="512.94" stroke="#5e5e5e" stroke-width="1"/><line x1="1016.70" y1="629.15" x2="883.21" y2="705.19" stroke="#5e5e5e" stroke-width="1"/><line x1="1016.70" y1="629.15" x2="1016.70" y2="521.81" stroke="#5e5e5e" stroke-width="1"/><line x1="1032.03" y1="638.02" x2="898.54" y2="714.06" stroke="#5e5e5e" stroke-width="1"/><line x1="1032.03" y1="638.02" x2="1032.03" y2="530.68" stroke="#5e5e5e" stroke-width="1"/><line x1="843.84" y1="543.14" x2="1025.35" y2="648.16" stroke="#5e5e5e" stroke-width="1"/><line x1="843.84" y1="543.14" x2="843.84" y2="435.80" stroke="#5e5e5e" stroke-width="1"/><line x1="830.19" y1="550.92" x2="1011.70" y2="655.94" stroke="#5e5e5e" stroke-width="1"/><line x1="830.19" y1="550.92" x2="830.19" y2="443.58" stroke="#5e5e5e" stroke-width="1"/><line x1="816.54" y1="558.69" x2="998.05" y2="663.71" stroke="#5e5e5e" stroke-width="1"/><line x1="816.54" y1="558.69" x2="816.54" y2="451.35" stroke="#5e5e5e" stroke-width="1"/><line x1="802.89" y1="566.47" x2="984.40" y2="671.49" stroke="#5e5e5e" stroke-width="1"/><line x1="802.89" y1="566.47" x2="802.89" y2="459.13" stroke="#5e5e5e" stroke-width="1"/><line x1="789.24" y1="574.24" x2="970.75" y2="679.26" stroke="#5e5e5e" stroke-width="1"/><line x1="789.24" y1="574.24" x2="789.24" y2="466.90" stroke="#5e5e5e" stroke-width="1"/><line x1="775.59" y1="582.02" x2="957.10" y2="687.04" stroke="#5e5e5e" stroke-width="1"/><line x1="775.59" y1="582.02" x2="775.59" y2="474.68" stroke="#5e5e5e" stroke-width="1"/><line x1="761.94" y1="589.79" x2="943.45" y2="694.81" stroke="#5e5e5e" stroke-width="1"/><line x1="761.94" y1="589.79" x2="761.94" y2="482.45" stroke="#5e5e5e" stroke-width="1"/><line x1="748.29" y1="597.57" x2="929.80" y2="702.59" stroke="#5e5e5e" stroke-width="1"/><line x1="748.29" y1="597.57" x2="748.29" y2="490.23" stroke="#5e5e5e" stroke-width="1"/><line x1="734.64" y1="605.34" x2="916.15" y2="710.36" stroke="#5e5e5e" stroke-width="1"/><line x1="734.64" y1="605.34" x2="734.64" y2="498.00" stroke="#5e5e5e" stroke-width="1"/><line x1="856.04" y1="529.59" x2="722.55" y2="605.63" stroke="#5e5e5e" stroke-width="1"/><line x1="856.04" y1="529.59" x2="1037.55" y2="634.61" stroke="#5e5e5e" stroke-width="1"/><line x1="856.04" y1="514.99" x2="722.55" y2="591.03" stroke="#5e5e5e" stroke-width="1"/><line x1="856.04" y1="514.99" x2="1037.55" y2="620.01" stroke="#5e5e5e" stroke-width="1"/><line x1="856.04" y1="500.39" x2="722.55" y2="576.43" stroke="#5e5e5e" stroke-width="1"/><line x1="856.04" y1="500.39" x2="1037.55" y2="605.41" stroke="#5e5e5e" stroke-width="1"/><line x1="856.04" y1="485.79" x2="722.55" y2="561.83" stroke="#5e5e5e" stroke-width="1"/><line x1="856.04" y1="485.79" x2="1037.55" y2="590.81" stroke="#5e5e5e" stroke-width="1"/><line x1="856.04" y1="471.19" x2="722.55" y2="547.23" stroke="#5e5e5e" stroke-width="1"/><line x1="856.04" y1="471.19" x2="1037.55" y2="576.21" stroke="#5e5e5e" stroke-width="1"/><line x1="856.04" y1="456.59" x2="722.55" y2="532.63" stroke="#5e5e5e" stroke-width="1"/><line x1="856.04" y1="456.59" x2="1037.55" y2="561.61" stroke="#5e5e5e" stroke-width="1"/><line x1="856.04" y1="441.99" x2="722.55" y2="518.03" stroke="#5e5e5e" stroke-width="1"/><line x1="856.04" y1="441.99" x2="1037.55" y2="547.01" stroke="#5e5e5e" stroke-width="1"/><g stroke="#f4f4f4" stroke-width="2" stroke-linecap="round"><line x1="851.20" y1="540.80" x2="1016.76" y2="636.60"/><line x1="851.20" y1="540.80" x2="742.00" y2="603.00"/><line x1="851.20" y1="540.80" x2="851.20" y2="459.04"/><line x1="851.20" y1="459.04" x2="1016.76" y2="554.84"/><line x1="851.20" y1="459.04" x2="742.00" y2="521.24"/><line x1="742.00" y1="603.00" x2="907.56" y2="698.80"/><line x1="742.00" y1="603.00" x2="742.00" y2="521.24"/><line x1="742.00" y1="521.24" x2="907.56" y2="617.04"/><line x1="1016.76" y1="636.60" x2="907.56" y2="698.80"/><line x1="1016.76" y1="636.60" x2="1016.76" y2="554.84"/><line x1="1016.76" y1="554.84" x2="907.56" y2="617.04"/><line x1="907.56" y1="698.80" x2="907.56" y2="617.04"/></g><polygon points="888.8,577.0 897.9,582.5 897.9,593.5 888.8,599.0 879.7,593.5 879.7,582.5" fill="#666cf0"/><circle cx="888.80" cy="578.20" r="3.1" fill="#101040" stroke="#7a80ff" stroke-width="1.1"/><circle cx="893.45" cy="579.51" r="3.1" fill="#101040" stroke="#7a80ff" stroke-width="1.1"/><circle cx="896.85" cy="583.10" r="3.1" fill="#101040" stroke="#7a80ff" stroke-width="1.1"/><circle cx="898.10" cy="588.00" r="3.1" fill="#101040" stroke="#7a80ff" stroke-width="1.1"/><circle cx="896.85" cy="592.90" r="3.1" fill="#101040" stroke="#7a80ff" stroke-width="1.1"/><circle cx="893.45" cy="596.49" r="3.1" fill="#101040" stroke="#7a80ff" stroke-width="1.1"/><circle cx="888.80" cy="597.80" r="3.1" fill="#101040" stroke="#7a80ff" stroke-width="1.1"/><circle cx="884.15" cy="596.49" r="3.1" fill="#101040" stroke="#7a80ff" stroke-width="1.1"/><circle cx="880.75" cy="592.90" r="3.1" fill="#101040" stroke="#7a80ff" stroke-width="1.1"/><circle cx="879.50" cy="588.00" r="3.1" fill="#101040" stroke="#7a80ff" stroke-width="1.1"/><circle cx="880.75" cy="583.10" r="3.1" fill="#101040" stroke="#7a80ff" stroke-width="1.1"/><circle cx="884.15" cy="579.51" r="3.1" fill="#101040" stroke="#7a80ff" stroke-width="1.1"/><circle cx="888.80" cy="578.00" r="1.3" fill="#f06a55"/><circle cx="888.80" cy="582.50" r="1.3" fill="#f06a55"/><circle cx="888.80" cy="588.00" r="1.3" fill="#f06a55"/><circle cx="888.80" cy="592.50" r="1.3" fill="#f06a55"/><circle cx="888.80" cy="597.50" r="1.3" fill="#f06a55"/><circle cx="884.30" cy="584.50" r="1.3" fill="#f06a55"/><circle cx="893.30" cy="584.50" r="1.3" fill="#f06a55"/><circle cx="879.80" cy="588.00" r="1.3" fill="#f06a55"/><circle cx="897.80" cy="588.00" r="1.3" fill="#f06a55"/><circle cx="883.30" cy="590.00" r="1.3" fill="#f06a55"/><circle cx="893.30" cy="590.00" r="1.3" fill="#f06a55"/><g stroke="#22c38e" stroke-width="1.5" fill="none" stroke-linejoin="round"><path d="M898.7,625.4 L920.3,621.6 L927.6,629.2 L905.7,633.4 Z M899.5,633.5 L917.5,630.5 L927.6,638.7 L905.7,642.6 Z M898.7,625.4 L899.5,633.5 M920.3,621.6 L917.5,630.5 M927.6,629.2 L927.6,638.7 M905.7,633.4 L905.7,642.6"/><path d="M956.4,593.7 L971.7,596.9 L968.5,603.5 L953.5,600.3 Z M949,604 L964.5,607.5 L962.8,617.8 L948.8,614 Z M956.4,593.7 L949,604 M971.7,596.9 L969,609.6 L962.8,617.8 M968.5,603.5 L964.5,607.5 M953.5,600.3 L948.8,614"/></g><circle cx="911.4" cy="629.9" r="2.6" fill="#f0fff8"/><circle cx="954.3" cy="604.5" r="2.6" fill="#f0fff8"/><text x="725.9" y="621.0" font-family="Liberation Sans" font-size="14.5" fill="#f0f0f0" text-anchor="end" dominant-baseline="central" transform="rotate(-30 725.9 621.0)">0</text><text x="741.2" y="629.9" font-family="Liberation Sans" font-size="14.5" fill="#f0f0f0" text-anchor="end" dominant-baseline="central" transform="rotate(-30 741.2 629.9)">0.5</text><text x="756.6" y="638.7" font-family="Liberation Sans" font-size="14.5" fill="#f0f0f0" text-anchor="end" dominant-baseline="central" transform="rotate(-30 756.6 638.7)">1</text><text x="771.9" y="647.6" font-family="Liberation Sans" font-size="14.5" fill="#f0f0f0" text-anchor="end" dominant-baseline="central" transform="rotate(-30 771.9 647.6)">1.5</text><text x="787.2" y="656.5" font-family="Liberation Sans" font-size="14.5" fill="#f0f0f0" text-anchor="end" dominant-baseline="central" transform="rotate(-30 787.2 656.5)">2</text><text x="802.6" y="665.3" font-family="Liberation Sans" font-size="14.5" fill="#f0f0f0" text-anchor="end" dominant-baseline="central" transform="rotate(-30 802.6 665.3)">2.5</text><text x="817.9" y="674.2" font-family="Liberation Sans" font-size="14.5" fill="#f0f0f0" text-anchor="end" dominant-baseline="central" transform="rotate(-30 817.9 674.2)">3</text><text x="833.2" y="683.1" font-family="Liberation Sans" font-size="14.5" fill="#f0f0f0" text-anchor="end" dominant-baseline="central" transform="rotate(-30 833.2 683.1)">3.5</text><text x="848.5" y="691.9" font-family="Liberation Sans" font-size="14.5" fill="#f0f0f0" text-anchor="end" dominant-baseline="central" transform="rotate(-30 848.5 691.9)">4</text><text x="863.9" y="700.8" font-family="Liberation Sans" font-size="14.5" fill="#f0f0f0" text-anchor="end" dominant-baseline="central" transform="rotate(-30 863.9 700.8)">4.5</text><text x="879.2" y="709.7" font-family="Liberation Sans" font-size="14.5" fill="#f0f0f0" text-anchor="end" dominant-baseline="central" transform="rotate(-30 879.2 709.7)">5</text><text x="894.5" y="718.6" font-family="Liberation Sans" font-size="14.5" fill="#f0f0f0" text-anchor="end" dominant-baseline="central" transform="rotate(-30 894.5 718.6)">5.5</text><text x="1027.3" y="651.7" font-family="Liberation Sans" font-size="14.5" fill="#f0f0f0" text-anchor="start" dominant-baseline="central" transform="rotate(33 1027.3 651.7)">&#8722;2</text><text x="1013.7" y="659.4" font-family="Liberation Sans" font-size="14.5" fill="#f0f0f0" text-anchor="start" dominant-baseline="central" transform="rotate(33 1013.7 659.4)">&#8722;1.5</text><text x="1000.0" y="667.2" font-family="Liberation Sans" font-size="14.5" fill="#f0f0f0" text-anchor="start" dominant-baseline="central" transform="rotate(33 1000.0 667.2)">&#8722;1</text><text x="986.4" y="675.0" font-family="Liberation Sans" font-size="14.5" fill="#f0f0f0" text-anchor="start" dominant-baseline="central" transform="rotate(33 986.4 675.0)">&#8722;0.5</text><text x="974.7" y="682.8" font-family="Liberation Sans" font-size="14.5" fill="#f0f0f0" text-anchor="start" dominant-baseline="central" transform="rotate(33 974.7 682.8)">0</text><text x="961.1" y="690.5" font-family="Liberation Sans" font-size="14.5" fill="#f0f0f0" text-anchor="start" dominant-baseline="central" transform="rotate(33 961.1 690.5)">0.5</text><text x="947.4" y="698.3" font-family="Liberation Sans" font-size="14.5" fill="#f0f0f0" text-anchor="start" dominant-baseline="central" transform="rotate(33 947.4 698.3)">1</text><text x="933.8" y="706.1" font-family="Liberation Sans" font-size="14.5" fill="#f0f0f0" text-anchor="start" dominant-baseline="central" transform="rotate(33 933.8 706.1)">1.5</text><text x="920.1" y="713.9" font-family="Liberation Sans" font-size="14.5" fill="#f0f0f0" text-anchor="start" dominant-baseline="central" transform="rotate(33 920.1 713.9)">2</text><text x="713.5" y="525.8" font-family="Liberation Sans" font-size="14.5" fill="#f0f0f0" text-anchor="end" dominant-baseline="central" transform="rotate(-30 713.5 525.8)">3</text><text x="719.5" y="536.8" font-family="Liberation Sans" font-size="14.5" fill="#f0f0f0" text-anchor="end" dominant-baseline="central" transform="rotate(-30 719.5 536.8)">2.5</text><text x="713.5" y="556.0" font-family="Liberation Sans" font-size="14.5" fill="#f0f0f0" text-anchor="end" dominant-baseline="central" transform="rotate(-30 713.5 556.0)">2</text><text x="719.5" y="566.3" font-family="Liberation Sans" font-size="14.5" fill="#f0f0f0" text-anchor="end" dominant-baseline="central" transform="rotate(-30 719.5 566.3)">1.5</text><text x="713.5" y="584.8" font-family="Liberation Sans" font-size="14.5" fill="#f0f0f0" text-anchor="end" dominant-baseline="central" transform="rotate(-30 713.5 584.8)">1</text><text x="719.5" y="595.1" font-family="Liberation Sans" font-size="14.5" fill="#f0f0f0" text-anchor="end" dominant-baseline="central" transform="rotate(-30 719.5 595.1)">0.5</text><text x="713.5" y="613.7" font-family="Liberation Sans" font-size="14.5" fill="#f0f0f0" text-anchor="end" dominant-baseline="central" transform="rotate(-30 713.5 613.7)">0</text><text x="778.5" y="683" font-family="Liberation Sans" font-size="16" fill="#f0f0f0" text-anchor="middle" dominant-baseline="central" transform="rotate(31 778.5 683)">L [meters]</text><text x="1005" y="698.5" font-family="Liberation Sans" font-size="16" fill="#f0f0f0" text-anchor="middle" dominant-baseline="central" transform="rotate(-31 1005 698.5)">W [meters]</text></g><text x="879.60" y="381.70" font-family="Liberation Sans" font-size="17" fill="#f0f0f0" text-anchor="middle" font-weight="bold" textLength="49.8" lengthAdjust="spacingAndGlyphs">Room</text><rect x="820.5" y="758.5" width="122" height="33" rx="3" fill="none" stroke="#2e2e2e" stroke-width="1"/><rect x="957.5" y="758.5" width="113" height="33" rx="3" fill="none" stroke="#2e2e2e" stroke-width="1"/><text x="833.00" y="779.00" font-family="Liberation Sans" font-size="12" fill="#686868" textLength="81" lengthAdjust="spacingAndGlyphs">Diagonal Front</text><text x="970.00" y="779.00" font-family="Liberation Sans" font-size="12" fill="#686868" textLength="72" lengthAdjust="spacingAndGlyphs">Orthographic</text><path d="M928,779 L932.4,771 L936.8,779Z" fill="#6e6e6e"/><path d="M1056,779 L1060.4,771 L1064.8,779Z" fill="#6e6e6e"/><defs><clipPath id="clfr"><rect x="1109.5" y="386.5" width="265.0" height="185.70000000000005"/></clipPath><clipPath id="cnsd"><rect x="1109.3" y="646.4" width="265.4" height="112.1"/></clipPath></defs><g stroke="#454545" stroke-width="1"><line x1="1132.8" y1="386.5" x2="1132.8" y2="572.2"/><line x1="1174.6" y1="386.5" x2="1174.6" y2="572.2"/><line x1="1204.2" y1="386.5" x2="1204.2" y2="572.2"/><line x1="1227.2" y1="386.5" x2="1227.2" y2="572.2"/><line x1="1246.0" y1="386.5" x2="1246.0" y2="572.2"/><line x1="1261.9" y1="386.5" x2="1261.9" y2="572.2"/><line x1="1275.6" y1="386.5" x2="1275.6" y2="572.2"/><line x1="1287.7" y1="386.5" x2="1287.7" y2="572.2"/><line x1="1298.6" y1="386.5" x2="1298.6" y2="572.2"/><line x1="1370.0" y1="386.5" x2="1370.0" y2="572.2"/><line x1="1109.5" y1="561.2" x2="1374.5" y2="561.2"/><line x1="1109.5" y1="545.8" x2="1374.5" y2="545.8"/><line x1="1109.5" y1="530.4" x2="1374.5" y2="530.4"/><line x1="1109.5" y1="515.0" x2="1374.5" y2="515.0"/><line x1="1109.5" y1="499.6" x2="1374.5" y2="499.6"/><line x1="1109.5" y1="484.2" x2="1374.5" y2="484.2"/><line x1="1109.5" y1="468.8" x2="1374.5" y2="468.8"/><line x1="1109.5" y1="453.4" x2="1374.5" y2="453.4"/><line x1="1109.5" y1="438.0" x2="1374.5" y2="438.0"/><line x1="1109.5" y1="422.6" x2="1374.5" y2="422.6"/><line x1="1109.5" y1="407.2" x2="1374.5" y2="407.2"/><line x1="1109.5" y1="391.8" x2="1374.5" y2="391.8"/></g><g clip-path="url(#clfr)"><path d="M1109.7,510.3 C1111.8,509.6 1117.9,507.6 1122.0,506.0 C1126.1,504.4 1130.1,502.6 1134.2,500.7 C1138.3,498.8 1142.6,496.8 1146.4,494.6 C1150.2,492.4 1153.6,490.4 1156.8,487.6 C1160.0,484.8 1163.1,481.3 1165.6,478.0 C1168.1,474.7 1170.0,471.7 1171.7,467.6 C1173.4,463.5 1174.8,458.6 1176.0,453.6 C1177.2,448.7 1177.8,443.0 1178.7,437.9 C1179.6,432.8 1180.0,421.1 1181.3,423.1 C1182.6,425.1 1184.7,441.1 1186.4,449.8 C1188.1,458.5 1189.1,468.9 1191.7,475.2 C1194.3,481.5 1197.7,484.6 1202.3,487.8 C1206.9,491.0 1214.3,493.0 1219.2,494.2 C1224.1,495.4 1228.4,496.1 1231.9,495.2 C1235.4,494.3 1238.1,491.2 1240.3,488.9 C1242.5,486.6 1244.2,482.7 1245.0,481.5 L1245.3,483.8 L1248.5,460.6 L1250.6,427.8 L1252.7,428.9 L1255.9,464.8 L1259.0,479.6 L1263.3,498.6 L1269.6,500.8 L1275.9,490.2 L1282.3,435.2 L1285.5,466.9 L1286.9,505.0 L1289.7,471.2 L1291.8,496.5 L1294.6,469.0 L1298.2,486.0 L1300.0,486.3 L1302.6,479.3 L1305.2,451.4 L1307.9,475.8 L1309.6,528.1 L1311.3,526.4 L1313.1,531.6 L1315.7,493.2 L1319.2,428.7 L1320.9,449.6 L1322.7,433.9 L1325.3,488.0 L1331.4,433.9 L1335.8,528.1 L1340.1,440.9 L1341.9,446.1 L1343.3,484.5 L1345.7,432.2 L1348.0,458.3 L1350.6,503.7 L1353.2,435.7 L1355.8,461.8 L1358.5,435.7 L1360.2,432.2 L1362.8,484.5 L1367.2,439.2 L1369.8,430.4 L1372.4,468.8 L1375.0,463.6 L1375.0,473.6 L1372.4,478.8 L1369.8,440.4 L1367.2,449.2 L1362.8,528.7 L1360.2,442.2 L1358.5,445.7 L1355.8,471.8 L1353.2,445.7 L1350.6,518.2 L1348.0,468.3 L1345.7,442.2 L1343.3,563.6 L1341.9,456.1 L1340.1,450.9 L1335.8,572.0 L1331.4,443.9 L1325.3,521.7 L1322.7,443.9 L1320.9,459.6 L1319.2,438.7 L1315.7,503.2 L1313.1,569.0 L1311.3,536.4 L1309.6,558.3 L1307.9,485.8 L1305.2,461.4 L1302.6,489.3 L1300.0,496.3 L1298.2,496.0 L1294.6,479.0 L1291.8,510.0 L1289.7,481.2 L1286.9,542.8 L1285.5,476.9 L1282.3,445.2 L1275.9,500.2 L1269.6,515.0 L1263.3,525.0 L1259.0,489.6 L1255.9,474.8 L1252.7,438.9 L1250.6,437.8 L1248.5,470.6 L1245.3,493.8 L1245.0,506.9 C1244.2,506.5 1242.5,504.6 1240.3,504.8 C1238.1,505.0 1236.1,507.4 1231.9,507.9 C1227.7,508.4 1220.3,508.8 1215.0,507.9 C1209.7,507.0 1204.1,504.9 1200.2,502.6 C1196.3,500.3 1194.2,499.8 1191.7,494.2 C1189.2,488.6 1187.1,478.2 1185.4,468.8 C1183.7,459.4 1182.6,438.1 1181.3,437.9 C1180.0,437.7 1179.3,457.4 1177.8,467.6 C1176.3,477.8 1174.4,490.0 1172.5,499.0 C1170.6,508.0 1168.4,513.6 1166.4,521.7 C1164.4,529.8 1162.6,538.1 1160.3,547.8 C1158.0,557.5 1160.9,574.6 1152.5,580.0 C1144.1,585.4 1116.8,580.0 1109.7,580.0 Z" fill="#8a3a2c"/><path d="M1109.7,541.7 C1111.8,541.7 1118.5,542.4 1122.0,541.7 C1125.5,541.0 1128.0,538.4 1130.7,537.4 C1133.5,536.4 1135.9,536.9 1138.5,535.6 C1141.1,534.3 1143.6,532.7 1146.4,529.5 C1149.2,526.3 1152.2,521.2 1155.1,516.4 C1158.0,511.6 1161.2,506.2 1163.8,500.7 C1166.4,495.2 1168.6,490.0 1170.8,483.3 C1173.0,476.6 1175.2,468.5 1176.9,460.6 C1178.7,452.8 1179.7,435.5 1181.3,436.2 C1182.9,436.9 1184.3,456.7 1186.4,464.6 C1188.5,472.5 1190.8,478.5 1193.8,483.6 C1196.8,488.7 1200.5,492.4 1204.4,495.2 C1208.3,498.0 1213.2,499.4 1217.1,500.5 C1221.0,501.6 1224.4,502.0 1227.6,501.6 C1230.8,501.2 1233.2,500.7 1236.1,498.4 C1239.0,496.1 1243.5,489.6 1245.0,487.8" fill="none" stroke="#ef553b" stroke-width="2.2" stroke-linejoin="round"/><polyline points="1245.3,487.8 1248.5,464.6 1250.6,431.8 1252.7,432.9 1255.9,468.8 1259.0,483.6 1263.3,502.6 1269.6,504.8 1275.9,494.2 1282.3,439.2 1285.5,470.9 1286.9,509.0 1289.7,475.2 1291.8,500.5 1294.6,473.0 1298.2,490.0 1300.0,490.3 1302.6,483.3 1305.2,455.4 1307.9,479.8 1309.6,532.1 1311.3,530.4 1313.1,535.6 1315.7,497.2 1319.2,432.7 1320.9,453.6 1322.7,437.9 1325.3,492.0 1331.4,437.9 1335.8,532.1 1340.1,444.9 1341.9,450.1 1343.3,488.5 1345.7,436.2 1348.0,462.3 1350.6,507.7 1353.2,439.7 1355.8,465.8 1358.5,439.7 1360.2,436.2 1362.8,488.5 1367.2,443.2 1369.8,434.4 1372.4,472.8 1375.0,467.6" fill="none" stroke="#ef553b" stroke-width="2.2" stroke-linejoin="round"/></g><rect x="1109.5" y="386.5" width="265.0" height="185.70000000000005" fill="none" stroke="#6a6a6a" stroke-width="1"/><text x="1242.00" y="382.50" font-family="Liberation Sans" font-size="17" fill="#f0f0f0" text-anchor="middle" font-weight="bold" textLength="225.4" lengthAdjust="spacingAndGlyphs">Low-frequency Response</text><text x="1107.00" y="565.80" font-family="Liberation Sans" font-size="13" fill="#f0f0f0" text-anchor="end" textLength="14.3" lengthAdjust="spacingAndGlyphs">50</text><text x="1107.00" y="550.40" font-family="Liberation Sans" font-size="13" fill="#f0f0f0" text-anchor="end" textLength="14.3" lengthAdjust="spacingAndGlyphs">55</text><text x="1107.00" y="535.00" font-family="Liberation Sans" font-size="13" fill="#f0f0f0" text-anchor="end" textLength="14.3" lengthAdjust="spacingAndGlyphs">60</text><text x="1107.00" y="519.60" font-family="Liberation Sans" font-size="13" fill="#f0f0f0" text-anchor="end" textLength="14.3" lengthAdjust="spacingAndGlyphs">65</text><text x="1107.00" y="504.20" font-family="Liberation Sans" font-size="13" fill="#f0f0f0" text-anchor="end" textLength="14.3" lengthAdjust="spacingAndGlyphs">70</text><text x="1107.00" y="488.80" font-family="Liberation Sans" font-size="13" fill="#f0f0f0" text-anchor="end" textLength="14.3" lengthAdjust="spacingAndGlyphs">75</text><text x="1107.00" y="473.40" font-family="Liberation Sans" font-size="13" fill="#f0f0f0" text-anchor="end" textLength="14.3" lengthAdjust="spacingAndGlyphs">80</text><text x="1107.00" y="458.00" font-family="Liberation Sans" font-size="13" fill="#f0f0f0" text-anchor="end" textLength="14.3" lengthAdjust="spacingAndGlyphs">85</text><text x="1107.00" y="442.60" font-family="Liberation Sans" font-size="13" fill="#f0f0f0" text-anchor="end" textLength="14.3" lengthAdjust="spacingAndGlyphs">90</text><text x="1107.00" y="427.20" font-family="Liberation Sans" font-size="13" fill="#f0f0f0" text-anchor="end" textLength="14.3" lengthAdjust="spacingAndGlyphs">95</text><text x="1107.00" y="411.80" font-family="Liberation Sans" font-size="13" fill="#f0f0f0" text-anchor="end" textLength="21.4" lengthAdjust="spacingAndGlyphs">100</text><text x="1107.00" y="396.40" font-family="Liberation Sans" font-size="13" fill="#f0f0f0" text-anchor="end" textLength="21.4" lengthAdjust="spacingAndGlyphs">105</text><text x="1128.2" y="576.5" font-family="Liberation Sans" font-size="13" fill="#f0f0f0" transform="rotate(90 1128.2 576.5)">20</text><text x="1170.0" y="576.5" font-family="Liberation Sans" font-size="13" fill="#f0f0f0" transform="rotate(90 1170.0 576.5)">30</text><text x="1199.6" y="576.5" font-family="Liberation Sans" font-size="13" fill="#f0f0f0" transform="rotate(90 1199.6 576.5)">40</text><text x="1222.6" y="576.5" font-family="Liberation Sans" font-size="13" fill="#f0f0f0" transform="rotate(90 1222.6 576.5)">50</text><text x="1241.4" y="576.5" font-family="Liberation Sans" font-size="13" fill="#f0f0f0" transform="rotate(90 1241.4 576.5)">60</text><text x="1257.3" y="576.5" font-family="Liberation Sans" font-size="13" fill="#f0f0f0" transform="rotate(90 1257.3 576.5)">70</text><text x="1271.0" y="576.5" font-family="Liberation Sans" font-size="13" fill="#f0f0f0" transform="rotate(90 1271.0 576.5)">80</text><text x="1283.1" y="576.5" font-family="Liberation Sans" font-size="13" fill="#f0f0f0" transform="rotate(90 1283.1 576.5)">90</text><text x="1294.0" y="583.0" font-family="Liberation Sans" font-size="13" fill="#f0f0f0" transform="rotate(90 1294.0 583.0)">100</text><text x="1365.4" y="576.5" font-family="Liberation Sans" font-size="13" fill="#f0f0f0" transform="rotate(90 1365.4 576.5)">200</text><text x="1242.80" y="618.50" font-family="Liberation Sans" font-size="15" fill="#f0f0f0" text-anchor="middle" textLength="108" lengthAdjust="spacingAndGlyphs">Frequency [Hz]</text><text x="1080" y="480" font-family="Liberation Sans" font-size="15" fill="#f0f0f0" text-anchor="middle" transform="rotate(-90 1080 480)" textLength="60" lengthAdjust="spacingAndGlyphs">SPL [dB]</text><g stroke="#454545" stroke-width="1"><line x1="1132.8" y1="646.4" x2="1132.8" y2="758.5"/><line x1="1174.6" y1="646.4" x2="1174.6" y2="758.5"/><line x1="1204.2" y1="646.4" x2="1204.2" y2="758.5"/><line x1="1227.2" y1="646.4" x2="1227.2" y2="758.5"/><line x1="1246.0" y1="646.4" x2="1246.0" y2="758.5"/><line x1="1261.9" y1="646.4" x2="1261.9" y2="758.5"/><line x1="1275.6" y1="646.4" x2="1275.6" y2="758.5"/><line x1="1287.7" y1="646.4" x2="1287.7" y2="758.5"/><line x1="1298.6" y1="646.4" x2="1298.6" y2="758.5"/><line x1="1370.0" y1="646.4" x2="1370.0" y2="758.5"/><line x1="1109.3" y1="748.9" x2="1374.7" y2="748.9"/><line x1="1109.3" y1="725.7" x2="1374.7" y2="725.7"/><line x1="1109.3" y1="702.5" x2="1374.7" y2="702.5"/><line x1="1109.3" y1="679.3" x2="1374.7" y2="679.3"/><line x1="1109.3" y1="656.1" x2="1374.7" y2="656.1"/></g><g clip-path="url(#cnsd)"><polygon points="1109.3,654.9 1123.4,649.6 1134.0,651.3 1140.4,649.6 1148.8,652.8 1155.2,660.2 1165.7,670.8 1174.2,678.2 1186.9,683.4 1208.0,688.7 1227.0,693.0 1235.0,691.6 1241.4,687.7 1245.3,681.3 1247.9,695.4 1251.8,698.7 1258.2,696.7 1262.1,683.8 1267.2,691.6 1273.7,694.2 1280.1,698.0 1282.7,700.6 1286.6,671.0 1289.2,683.8 1293.0,687.7 1296.9,694.2 1302.1,691.6 1305.3,696.7 1309.1,677.4 1313.0,663.2 1316.2,682.6 1320.1,694.2 1324.6,667.1 1330.4,696.7 1335.6,649.0 1339.4,694.2 1343.3,660.6 1345.9,691.6 1349.8,677.4 1352.3,695.4 1357.5,682.6 1359.4,695.4 1362.7,659.3 1366.5,689.0 1369.1,676.1 1371.7,691.6 1374.7,687.7 1374.7,712.2 1370.4,743.2 1367.8,707.1 1363.3,756.0 1359.4,709.6 1357.5,730.3 1353.6,708.3 1349.8,727.7 1347.2,709.6 1343.3,745.7 1340.7,708.3 1335.6,757.3 1330.4,709.6 1325.3,747.0 1318.8,710.9 1314.3,756.0 1309.8,738.0 1305.3,707.1 1299.5,712.2 1293.0,720.0 1286.6,749.6 1282.7,704.5 1276.3,710.9 1268.5,716.1 1262.7,732.8 1256.9,704.5 1249.2,709.6 1245.3,732.8 1241.4,720.0 1235.0,712.2 1227.0,713.0 1208.0,718.3 1186.9,724.7 1174.2,732.0 1159.4,759.0 1109.3,759.0" fill="#40469c"/></g><line x1="1109.3" y1="702.5" x2="1374.7" y2="702.5" stroke="#6670ff" stroke-width="2.2"/><rect x="1109.3" y="646.4" width="265.4000000000001" height="112.10000000000002" fill="none" stroke="#6a6a6a" stroke-width="1"/><text x="1242.70" y="641.80" font-family="Liberation Sans" font-size="17" fill="#f0f0f0" text-anchor="middle" font-weight="bold" textLength="260.6" lengthAdjust="spacingAndGlyphs">Normalized Spatial Deviation</text><text x="1107.00" y="753.50" font-family="Liberation Sans" font-size="13" fill="#f0f0f0" text-anchor="end">&#8722;10</text><text x="1107.00" y="730.30" font-family="Liberation Sans" font-size="13" fill="#f0f0f0" text-anchor="end">&#8722;5</text><text x="1107.00" y="707.10" font-family="Liberation Sans" font-size="13" fill="#f0f0f0" text-anchor="end">0</text><text x="1107.00" y="683.90" font-family="Liberation Sans" font-size="13" fill="#f0f0f0" text-anchor="end">5</text><text x="1107.00" y="660.70" font-family="Liberation Sans" font-size="13" fill="#f0f0f0" text-anchor="end">10</text><text x="1128.2" y="762.5" font-family="Liberation Sans" font-size="13" fill="#f0f0f0" transform="rotate(90 1128.2 762.5)">20</text><text x="1170.0" y="762.5" font-family="Liberation Sans" font-size="13" fill="#f0f0f0" transform="rotate(90 1170.0 762.5)">30</text><text x="1199.6" y="762.5" font-family="Liberation Sans" font-size="13" fill="#f0f0f0" transform="rotate(90 1199.6 762.5)">40</text><text x="1222.6" y="762.5" font-family="Liberation Sans" font-size="13" fill="#f0f0f0" transform="rotate(90 1222.6 762.5)">50</text><text x="1241.4" y="762.5" font-family="Liberation Sans" font-size="13" fill="#f0f0f0" transform="rotate(90 1241.4 762.5)">60</text><text x="1257.3" y="762.5" font-family="Liberation Sans" font-size="13" fill="#f0f0f0" transform="rotate(90 1257.3 762.5)">70</text><text x="1271.0" y="762.5" font-family="Liberation Sans" font-size="13" fill="#f0f0f0" transform="rotate(90 1271.0 762.5)">80</text><text x="1283.1" y="762.5" font-family="Liberation Sans" font-size="13" fill="#f0f0f0" transform="rotate(90 1283.1 762.5)">90</text><text x="1294.0" y="769.0" font-family="Liberation Sans" font-size="13" fill="#f0f0f0" transform="rotate(90 1294.0 769.0)">100</text><text x="1365.4" y="762.5" font-family="Liberation Sans" font-size="13" fill="#f0f0f0" transform="rotate(90 1365.4 762.5)">200</text><text x="1242.00" y="805.00" font-family="Liberation Sans" font-size="15" fill="#f0f0f0" text-anchor="middle" textLength="108" lengthAdjust="spacingAndGlyphs">Frequency [Hz]</text><text x="1077.5" y="702.5" font-family="Liberation Sans" font-size="15" fill="#f0f0f0" text-anchor="middle" transform="rotate(-90 1077.5 702.5)" textLength="60" lengthAdjust="spacingAndGlyphs">SPL [dB]</text><g stroke="#454545" stroke-width="1"><line x1="1476.4" y1="386.5" x2="1476.4" y2="758.5"/><line x1="1517.3" y1="386.5" x2="1517.3" y2="758.5"/><line x1="1558.2" y1="386.5" x2="1558.2" y2="758.5"/><line x1="1599.1" y1="386.5" x2="1599.1" y2="758.5"/><line x1="1434.5" y1="483.2" x2="1624.1" y2="483.2"/></g><polyline points="1435.3,598.5 1443.7,598.5 1448.0,576.5 1452.2,585.4 1456.4,588.5 1463.8,597.0 1469.1,597.6 1472.3,595.5 1476.5,598.5 1481.8,595.5 1488.1,597.4 1501.9,597.4 1508.2,599.1 1516.7,599.7 1520.9,597.4 1541.0,596.4 1545.9,603.3 1552.6,603.3 1558.9,602.7 1578.0,602.7 1583.3,604.4 1624.1,604.4" fill="none" stroke="#e4553a" stroke-width="1.3"/><polyline points="1435.3,741.2 1442.7,741.4 1448.0,744.4 1459.6,742.2 1463.8,741.2 1468.1,741.4 1472.3,744.0 1482.9,744.4 1516.7,742.5 1522.0,744.0 1541.0,744.0 1547.3,741.8 1559.0,742.9 1578.0,742.5 1582.2,747.1 1624.1,747.1" fill="none" stroke="#5a63e0" stroke-width="1.3"/><line x1="1550.2" y1="597" x2="1550.2" y2="749" stroke="#f4f4f4" stroke-width="2.2" stroke-dasharray="9.5,8.5"/><rect x="1434.5" y="386.5" width="189.5999999999999" height="372.0" fill="none" stroke="#6a6a6a" stroke-width="1"/><text x="1550.20" y="593.20" font-family="Liberation Serif" font-size="13" fill="#f0f0f0" text-anchor="middle" font-weight="bold" textLength="41" lengthAdjust="spacingAndGlyphs">I3725</text><text x="1529.70" y="381.50" font-family="Liberation Sans" font-size="17" fill="#f0f0f0" text-anchor="middle" font-weight="bold" textLength="65.3" lengthAdjust="spacingAndGlyphs">Metrics</text><text x="1432.00" y="487.80" font-family="Liberation Sans" font-size="13" fill="#f0f0f0" text-anchor="end" textLength="28" lengthAdjust="spacingAndGlyphs">0.50</text><text x="1432.00" y="763.00" font-family="Liberation Sans" font-size="13" fill="#f0f0f0" text-anchor="end" textLength="28" lengthAdjust="spacingAndGlyphs">0.00</text><text x="1435.50" y="773.50" font-family="Liberation Sans" font-size="13" fill="#f0f0f0" text-anchor="middle">0</text><text x="1476.40" y="773.50" font-family="Liberation Sans" font-size="13" fill="#f0f0f0" text-anchor="middle">10</text><text x="1517.30" y="773.50" font-family="Liberation Sans" font-size="13" fill="#f0f0f0" text-anchor="middle">20</text><text x="1558.20" y="773.50" font-family="Liberation Sans" font-size="13" fill="#f0f0f0" text-anchor="middle">30</text><text x="1599.10" y="773.50" font-family="Liberation Sans" font-size="13" fill="#f0f0f0" text-anchor="middle">40</text><text x="1529.00" y="789.50" font-family="Liberation Sans" font-size="15" fill="#f0f0f0" text-anchor="middle" textLength="92" lengthAdjust="spacingAndGlyphs">Iterations [&#8722;]</text><text x="1399" y="574" font-family="Liberation Sans" font-size="15" fill="#f0f0f0" text-anchor="middle" transform="rotate(-90 1399 574)" textLength="36" lengthAdjust="spacingAndGlyphs">&#916;f [&#8722;]</text><line x1="1647" y1="401.0" x2="1677" y2="401.0" stroke="#e4553a" stroke-width="1.2"/><text x="1682.30" y="405.60" font-family="Liberation Sans" font-size="13" fill="#f0f0f0">LFR Metric</text><line x1="1647" y1="430.0" x2="1677" y2="430.0" stroke="#5a63e0" stroke-width="1.2"/><text x="1682.30" y="434.62" font-family="Liberation Sans" font-size="13" fill="#f0f0f0">SD Metric</text><line x1="1647" y1="459.0" x2="1677" y2="459.0" stroke="#ef553b" stroke-width="2.4"/><text x="1682.30" y="463.64" font-family="Liberation Sans" font-size="13" fill="#f0f0f0">LFR Average</text><text x="1682.30" y="492.66" font-family="Liberation Sans" font-size="13" fill="#f0f0f0">LFR Grid</text><line x1="1647" y1="517.1" x2="1677" y2="517.1" stroke="#636efa" stroke-width="2.4"/><text x="1682.30" y="521.68" font-family="Liberation Sans" font-size="13" fill="#f0f0f0">SD Average</text><text x="1682.30" y="550.70" font-family="Liberation Sans" font-size="13" fill="#f0f0f0">SD Grid</text><line x1="1647" y1="575.1" x2="1677" y2="575.1" stroke="#f8f8f8" stroke-width="3"/><text x="1682.30" y="579.72" font-family="Liberation Sans" font-size="13" fill="#f0f0f0">Room</text><circle cx="1662" cy="604.1" r="2.6" fill="#f4f4f4"/><text x="1682.30" y="608.74" font-family="Liberation Sans" font-size="13" fill="#f0f0f0">Acoustical Center</text><line x1="1647" y1="633.2" x2="1677" y2="633.2" stroke="#1ec48f" stroke-width="3"/><text x="1682.30" y="637.76" font-family="Liberation Sans" font-size="13" fill="#f0f0f0">Speakers</text><path d="M1662,657.2 L1667,662.2 L1662,667.2 L1657,662.2Z" fill="#ef553b"/><text x="1682.30" y="666.78" font-family="Liberation Sans" font-size="13" fill="#f0f0f0">Receiver</text><circle cx="1662" cy="691.2" r="2.4" fill="none" stroke="#6f78ff" stroke-width="1.3"/><text x="1682.30" y="695.80" font-family="Liberation Sans" font-size="13" fill="#f0f0f0">Receiver Grid</text><text x="710.00" y="814.30" font-family="Liberation Sans" font-size="13" fill="#f0f0f0" font-weight="bold" textLength="86" lengthAdjust="spacingAndGlyphs">Iteration: G28</text><line x1="720" y1="830" x2="1613" y2="830" stroke="#c9d4e2" stroke-width="5" stroke-linecap="round"/><circle cx="1264" cy="830" r="9" fill="#c9d4e2" stroke="#9aa8b8" stroke-width="0.8"/><line x1="719.7" y1="845.5" x2="719.7" y2="847" stroke="#777" stroke-width="1"/><line x1="739.1" y1="845" x2="739.1" y2="848.5" stroke="#777" stroke-width="1"/><line x1="758.6" y1="845.5" x2="758.6" y2="847" stroke="#777" stroke-width="1"/><line x1="778.0" y1="845" x2="778.0" y2="848.5" stroke="#777" stroke-width="1"/><line x1="797.4" y1="845.5" x2="797.4" y2="847" stroke="#777" stroke-width="1"/><line x1="816.9" y1="845" x2="816.9" y2="848.5" stroke="#777" stroke-width="1"/><line x1="836.3" y1="845.5" x2="836.3" y2="847" stroke="#777" stroke-width="1"/><line x1="855.7" y1="845" x2="855.7" y2="848.5" stroke="#777" stroke-width="1"/><line x1="875.1" y1="845.5" x2="875.1" y2="847" stroke="#777" stroke-width="1"/><line x1="894.6" y1="845" x2="894.6" y2="848.5" stroke="#777" stroke-width="1"/><line x1="914.0" y1="845.5" x2="914.0" y2="847" stroke="#777" stroke-width="1"/><line x1="933.4" y1="845" x2="933.4" y2="848.5" stroke="#777" stroke-width="1"/><line x1="952.9" y1="845.5" x2="952.9" y2="847" stroke="#777" stroke-width="1"/><line x1="972.3" y1="845" x2="972.3" y2="848.5" stroke="#777" stroke-width="1"/><line x1="991.7" y1="845.5" x2="991.7" y2="847" stroke="#777" stroke-width="1"/><line x1="1011.2" y1="845" x2="1011.2" y2="848.5" stroke="#777" stroke-width="1"/><line x1="1030.6" y1="845.5" x2="1030.6" y2="847" stroke="#777" stroke-width="1"/><line x1="1050.0" y1="845" x2="1050.0" y2="848.5" stroke="#777" stroke-width="1"/><line x1="1069.4" y1="845.5" x2="1069.4" y2="847" stroke="#777" stroke-width="1"/><line x1="1088.9" y1="845" x2="1088.9" y2="848.5" stroke="#777" stroke-width="1"/><line x1="1108.3" y1="845.5" x2="1108.3" y2="847" stroke="#777" stroke-width="1"/><line x1="1127.7" y1="845" x2="1127.7" y2="848.5" stroke="#777" stroke-width="1"/><line x1="1147.2" y1="845.5" x2="1147.2" y2="847" stroke="#777" stroke-width="1"/><line x1="1166.6" y1="845" x2="1166.6" y2="848.5" stroke="#777" stroke-width="1"/><line x1="1186.0" y1="845.5" x2="1186.0" y2="847" stroke="#777" stroke-width="1"/><line x1="1205.5" y1="845" x2="1205.5" y2="848.5" stroke="#777" stroke-width="1"/><line x1="1224.9" y1="845.5" x2="1224.9" y2="847" stroke="#777" stroke-width="1"/><line x1="1244.3" y1="845" x2="1244.3" y2="848.5" stroke="#777" stroke-width="1"/><line x1="1263.8" y1="845.5" x2="1263.8" y2="847" stroke="#777" stroke-width="1"/><line x1="1283.2" y1="845" x2="1283.2" y2="848.5" stroke="#777" stroke-width="1"/><line x1="1302.6" y1="845.5" x2="1302.6" y2="847" stroke="#777" stroke-width="1"/><line x1="1322.0" y1="845" x2="1322.0" y2="848.5" stroke="#777" stroke-width="1"/><line x1="1341.5" y1="845.5" x2="1341.5" y2="847" stroke="#777" stroke-width="1"/><line x1="1360.9" y1="845" x2="1360.9" y2="848.5" stroke="#777" stroke-width="1"/><line x1="1380.3" y1="845.5" x2="1380.3" y2="847" stroke="#777" stroke-width="1"/><line x1="1399.8" y1="845" x2="1399.8" y2="848.5" stroke="#777" stroke-width="1"/><line x1="1419.2" y1="845.5" x2="1419.2" y2="847" stroke="#777" stroke-width="1"/><line x1="1438.6" y1="845" x2="1438.6" y2="848.5" stroke="#777" stroke-width="1"/><line x1="1458.1" y1="845.5" x2="1458.1" y2="847" stroke="#777" stroke-width="1"/><line x1="1477.5" y1="845" x2="1477.5" y2="848.5" stroke="#777" stroke-width="1"/><line x1="1496.9" y1="845.5" x2="1496.9" y2="847" stroke="#777" stroke-width="1"/><line x1="1516.3" y1="845" x2="1516.3" y2="848.5" stroke="#777" stroke-width="1"/><line x1="1535.8" y1="845.5" x2="1535.8" y2="847" stroke="#777" stroke-width="1"/><line x1="1555.2" y1="845" x2="1555.2" y2="848.5" stroke="#777" stroke-width="1"/><line x1="1574.6" y1="845.5" x2="1574.6" y2="847" stroke="#777" stroke-width="1"/><line x1="1594.1" y1="845" x2="1594.1" y2="848.5" stroke="#777" stroke-width="1"/><line x1="1613.5" y1="845.5" x2="1613.5" y2="847" stroke="#777" stroke-width="1"/><text x="719.70" y="863.00" font-family="Liberation Sans" font-size="13" fill="#f0f0f0" text-anchor="middle">G0</text><text x="758.56" y="863.00" font-family="Liberation Sans" font-size="13" fill="#f0f0f0" text-anchor="middle">G2</text><text x="797.42" y="863.00" font-family="Liberation Sans" font-size="13" fill="#f0f0f0" text-anchor="middle">G4</text><text x="836.28" y="863.00" font-family="Liberation Sans" font-size="13" fill="#f0f0f0" text-anchor="middle">G6</text><text x="875.14" y="863.00" font-family="Liberation Sans" font-size="13" fill="#f0f0f0" text-anchor="middle">G8</text><text x="914.00" y="863.00" font-family="Liberation Sans" font-size="13" fill="#f0f0f0" text-anchor="middle">G10</text><text x="952.87" y="863.00" font-family="Liberation Sans" font-size="13" fill="#f0f0f0" text-anchor="middle">G12</text><text x="991.73" y="863.00" font-family="Liberation Sans" font-size="13" fill="#f0f0f0" text-anchor="middle">G14</text><text x="1030.59" y="863.00" font-family="Liberation Sans" font-size="13" fill="#f0f0f0" text-anchor="middle">G16</text><text x="1069.45" y="863.00" font-family="Liberation Sans" font-size="13" fill="#f0f0f0" text-anchor="middle">G18</text><text x="1108.31" y="863.00" font-family="Liberation Sans" font-size="13" fill="#f0f0f0" text-anchor="middle">G20</text><text x="1147.17" y="863.00" font-family="Liberation Sans" font-size="13" fill="#f0f0f0" text-anchor="middle">G22</text><text x="1186.03" y="863.00" font-family="Liberation Sans" font-size="13" fill="#f0f0f0" text-anchor="middle">G24</text><text x="1224.89" y="863.00" font-family="Liberation Sans" font-size="13" fill="#f0f0f0" text-anchor="middle">G26</text><text x="1263.75" y="863.00" font-family="Liberation Sans" font-size="13" fill="#f0f0f0" text-anchor="middle">G28</text><text x="1302.61" y="863.00" font-family="Liberation Sans" font-size="13" fill="#f0f0f0" text-anchor="middle">G30</text><text x="1341.47" y="863.00" font-family="Liberation Sans" font-size="13" fill="#f0f0f0" text-anchor="middle">G32</text><text x="1380.33" y="863.00" font-family="Liberation Sans" font-size="13" fill="#f0f0f0" text-anchor="middle">G34</text><text x="1419.20" y="863.00" font-family="Liberation Sans" font-size="13" fill="#f0f0f0" text-anchor="middle">G36</text><text x="1458.06" y="863.00" font-family="Liberation Sans" font-size="13" fill="#f0f0f0" text-anchor="middle">G38</text><text x="1496.92" y="863.00" font-family="Liberation Sans" font-size="13" fill="#f0f0f0" text-anchor="middle">G40</text><text x="1535.78" y="863.00" font-family="Liberation Sans" font-size="13" fill="#f0f0f0" text-anchor="middle">G42</text><text x="1574.64" y="863.00" font-family="Liberation Sans" font-size="13" fill="#f0f0f0" text-anchor="middle">G44</text><text x="1613.50" y="863.00" font-family="Liberation Sans" font-size="13" fill="#f0f0f0" text-anchor="middle">G46</text></svg>
</body></html>
